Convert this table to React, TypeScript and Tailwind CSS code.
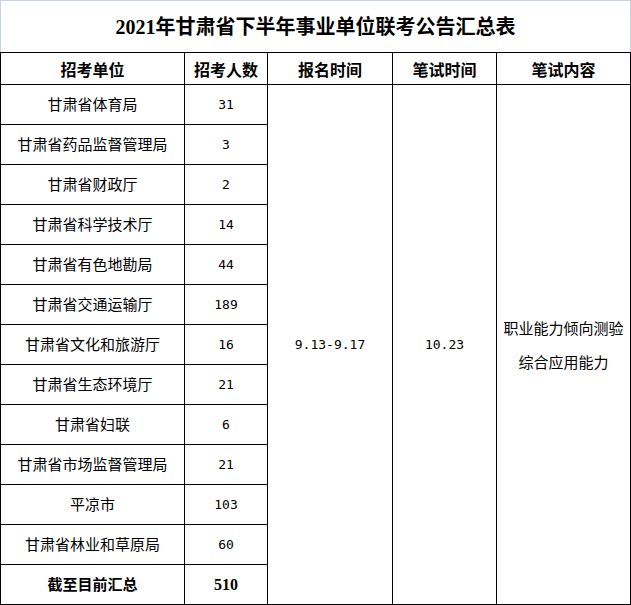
const rows: [string, string][] = [
  ["甘肃省体育局", "31"],
  ["甘肃省药品监督管理局", "3"],
  ["甘肃省财政厅", "2"],
  ["甘肃省科学技术厅", "14"],
  ["甘肃省有色地勘局", "44"],
  ["甘肃省交通运输厅", "189"],
  ["甘肃省文化和旅游厅", "16"],
  ["甘肃省生态环境厅", "21"],
  ["甘肃省妇联", "6"],
  ["甘肃省市场监督管理局", "21"],
  ["平凉市", "103"],
  ["甘肃省林业和草原局", "60"],
];

const cjk = "font-['Noto_Sans_CJK_SC',sans-serif]";
const mono = "font-['DejaVu_Sans_Mono','Noto_Sans_CJK_SC',monospace]";

export default function App() {
  return (
    <div className="w-[631px] bg-white text-black">
      <div className="h-[52px] border-t border-l border-r border-[#c9d1e3] flex items-center justify-center">
        <h1 className="font-['Liberation_Serif','Noto_Sans_CJK_SC',serif] font-bold text-[20px] leading-none">
          2021年甘肃省下半年事业单位联考公告汇总表
        </h1>
      </div>
      <div className="flex">
        <table className="w-[630px] table-fixed border-collapse">
          <colgroup>
            <col className="w-[184px]" />
            <col className="w-[83px]" />
            <col className="w-[125px]" />
            <col className="w-[104px]" />
            <col className="w-[134px]" />
          </colgroup>
          <thead>
            <tr className="h-[32px]">
              {["招考单位", "招考人数", "报名时间", "笔试时间", "笔试内容"].map((h) => (
                <th
                  key={h}
                  className={`border border-black text-center font-bold text-[16px] p-0 ${cjk}`}
                >
                  {h}
                </th>
              ))}
            </tr>
          </thead>
          <tbody>
            {rows.map(([unit, n], i) => (
              <tr key={unit} className="h-[40px]">
                <td className={`border border-black text-center text-[15px] p-0 ${cjk}`}>{unit}</td>
                <td className={`border border-black text-center text-[13px] p-0 ${mono}`}>{n}</td>
                {i === 0 && (
                  <>
                    <td rowSpan={13} className={`border border-black text-center text-[13px] p-0 ${mono}`}>
                      9.13-9.17
                    </td>
                    <td rowSpan={13} className={`border border-black text-center text-[13px] p-0 ${mono}`}>
                      10.23
                    </td>
                    <td rowSpan={13} className={`border border-black text-center text-[15px] leading-[34px] p-0 ${cjk}`}>
                      <p>职业能力倾向测验</p>
                      <p>综合应用能力</p>
                    </td>
                  </>
                )}
              </tr>
            ))}
            <tr className="h-[40px]">
              <td className={`border border-black text-center font-bold text-[15px] p-0 ${cjk}`}>截至目前汇总</td>
              <td className="border border-black text-center font-bold text-[16px] p-0 font-['Liberation_Serif',serif]">510</td>
            </tr>
          </tbody>
        </table>
        <div className="w-px bg-[#c9d1e3]" />
      </div>
    </div>
  );
}
